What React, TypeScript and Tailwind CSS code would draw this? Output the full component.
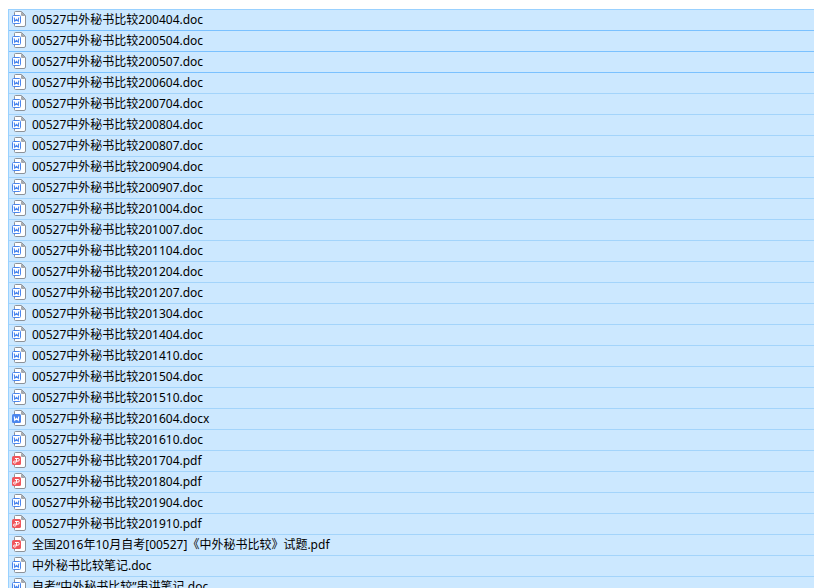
import clsx from "clsx";

type FileKind = "doc" | "docx" | "pdf";

const files = [
  "00527中外秘书比较200404.doc",
  "00527中外秘书比较200504.doc",
  "00527中外秘书比较200507.doc",
  "00527中外秘书比较200604.doc",
  "00527中外秘书比较200704.doc",
  "00527中外秘书比较200804.doc",
  "00527中外秘书比较200807.doc",
  "00527中外秘书比较200904.doc",
  "00527中外秘书比较200907.doc",
  "00527中外秘书比较201004.doc",
  "00527中外秘书比较201007.doc",
  "00527中外秘书比较201104.doc",
  "00527中外秘书比较201204.doc",
  "00527中外秘书比较201207.doc",
  "00527中外秘书比较201304.doc",
  "00527中外秘书比较201404.doc",
  "00527中外秘书比较201410.doc",
  "00527中外秘书比较201504.doc",
  "00527中外秘书比较201510.doc",
  "00527中外秘书比较201604.docx",
  "00527中外秘书比较201610.doc",
  "00527中外秘书比较201704.pdf",
  "00527中外秘书比较201804.pdf",
  "00527中外秘书比较201904.doc",
  "00527中外秘书比较201910.pdf",
  "全国2016年10月自考[00527]《中外秘书比较》试题.pdf",
  "中外秘书比较笔记.doc",
  "自考“中外秘书比较”串讲笔记.doc",
];

function FileIcon({ kind }: { kind: FileKind }) {
  const badge = kind === "pdf" ? "#f0565c" : "#4a86ee";
  return (
    <svg viewBox="0 0 16 16" className="mb-[2px] size-4 shrink-0" aria-hidden="true">
      <path
        d="M4.5 .5h6l4 4v9.5a1.5 1.5 0 0 1-1.5 1.5h-8.5a1 1 0 0 1-1-1v-13a1 1 0 0 1 1-1z"
        fill="#fff"
        stroke="#8c9299"
      />
      <path d="M10 .5v3.500a1 1 0 0 0 1 1h3.500z" fill="#a3a7ac" />
      {kind === "doc" ? (
        <rect x="1.5" y="4.5" width="8" height="8" rx="1" fill="#fff" stroke={badge} />
      ) : (
        <rect x="1" y="4" width="9" height="9" rx="1.5" fill={badge} />
      )}
      {kind === "pdf" ? (
        <path
          d="M4 6.5h3a1.300 1.300 0 0 1 0 2.600H3.500a1 1 0 0 0 0 2c1.300 0 2-.8 2-2V7"
          fill="none"
          stroke="#fff"
        />
      ) : (
        <path
          d="M3.300 6.500l.4 3.800 1.800-2 1.800 2 .4-3.800"
          fill="none"
          stroke={kind === "doc" ? badge : "#fff"}
          strokeWidth="1.1"
        />
      )}
    </svg>
  );
}

export default function App() {
  return (
    <main className="h-screen overflow-hidden bg-white pt-[9px] pl-2 font-['Noto_Sans','Noto_Sans_CJK_SC',sans-serif] text-xs text-black">
      <ul className="border-t border-l border-[#99d1ff]">
        {files.map((name, i) => (
          <li
            key={name}
            className={clsx(
              "flex h-[21px] items-center gap-[5px] border-b bg-[#cce8ff] pl-[2px] whitespace-nowrap",
              i < 3 ? "border-[#7ac1ff]" : "border-[#a3d4fb]",
            )}
          >
            <FileIcon kind={name.split(".").pop() as FileKind} />
            <span className="leading-5">{name}</span>
          </li>
        ))}
      </ul>
    </main>
  );
}
